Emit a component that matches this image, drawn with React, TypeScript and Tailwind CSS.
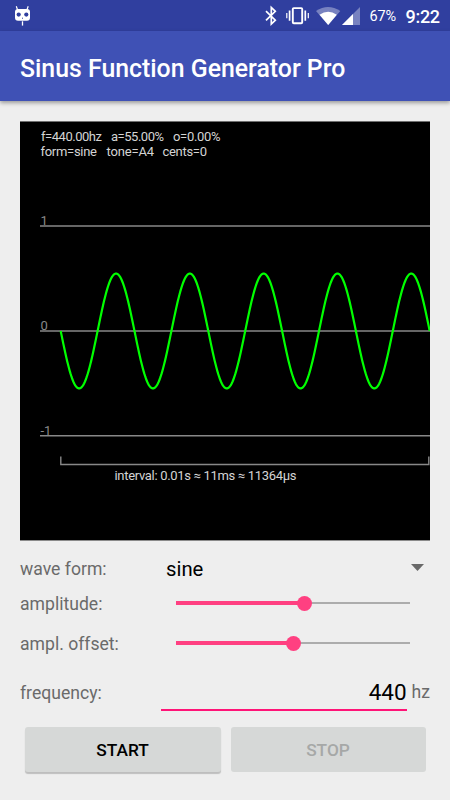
import type { ReactNode } from "react";

const AMPLITUDE = 57.5;
const PERIOD = 73.8;

function wavePath() {
  const points: string[] = [];
  for (let x = 0; x <= PERIOD * 5; x += 0.9) {
    const y = 210 + AMPLITUDE * Math.sin((x / PERIOD) * Math.PI * 2);
    points.push(`${(40.7 + x).toFixed(2)},${y.toFixed(2)}`);
  }
  return `M${points.join("L")}`;
}

const readouts = [
  { x: 21, y: 19.7, width: 61, text: "f=440.00hz" },
  { x: 91, y: 19.7, width: 53, text: "a=55.00%" },
  { x: 153, y: 19.7, width: 47.5, text: "o=0.00%" },
  { x: 20.5, y: 34.7, width: 56.5, text: "form=sine" },
  { x: 86.5, y: 34.7, width: 47.5, text: "tone=A4" },
  { x: 142.5, y: 34.7, width: 44.5, text: "cents=0" },
];

const gridLines = [
  { y: 105.1, label: "1" },
  { y: 210.1, label: "0" },
  { y: 314.7, label: "-1" },
];

function StatusBar() {
  return (
    <div className="flex h-[31px] items-center bg-[#303f9f] text-white">
      <svg className="ml-[14px] h-[22px] w-[17px]" viewBox="0 0 17 22">
        <path d="M2.3 1.3 3.6 5M14.2 1.3 12.9 5" stroke="white" strokeWidth="1.2" />
        <rect x="1" y="4" width="15" height="11.8" rx="3" fill="white" />
        <circle cx="4.7" cy="9.6" r="2.1" fill="#303f9f" />
        <circle cx="12.3" cy="9.6" r="2.1" fill="#303f9f" />
        <path d="M8 13.2h1" stroke="#303f9f" />
        <path d="M8.5 16.3v4.3" stroke="white" strokeWidth="1.3" />
      </svg>
      <svg className="ml-[231px] h-[22px] w-[100px]" viewBox="262 5 100 22">
        <path d="m266 11.2 9.3 9-4 3.8V7.4l4 3.9-9.3 9.1" fill="none" stroke="white" strokeWidth="1.7" />
        <rect x="292.8" y="8.1" width="9.4" height="15.2" rx="1" fill="none" stroke="white" strokeWidth="1.9" />
        <path d="M289.6 10.5v10.3M305.3 10.5v10.3" stroke="white" strokeWidth="1.7" />
        <path d="M286.8 13v5.3M308.3 13v5.3" stroke="white" strokeWidth="1.2" />
        <path d="M316 11q12-8 24.3 0L328.2 25Z" fill="white" opacity=".35" />
        <path d="M319.5 14.7q8.7-5.8 17.3 0L328.2 25Z" fill="white" />
        <path d="M342 25 360 7v18Z" fill="white" opacity=".35" />
        <path d="m342 25 11-11v11Z" fill="white" />
      </svg>
      <span className="ml-[7.5px] w-[36px] pt-[3px] text-[14.5px] leading-none tracking-[-0.2px]">67%</span>
      <span className="pt-[2px] text-[18px] leading-none font-medium tracking-[-0.3px]">9:22</span>
    </div>
  );
}

function Scope() {
  return (
    <svg className="block h-[418px] w-[410px]" viewBox="0 1 410 418">
      <g fill="#d4d4d4" fontSize="13">
        {readouts.map((r) => (
          <text key={r.text} x={r.x} y={r.y} textLength={r.width}>
            {r.text}
          </text>
        ))}
        <text x="94.5" y="358.7" textLength="182">
          interval: 0.01s ≈ 11ms ≈ 11364μs
        </text>
      </g>
      {gridLines.map((line) => (
        <g key={line.label}>
          <text x="20.5" y={line.y - 1} fill="#888888" fontSize="13">
            {line.label}
          </text>
          <path d={`M20 ${line.y}H410`} stroke="#888888" strokeWidth="1.5" />
        </g>
      ))}
      <path d="M40.8 335.5v8h368v-8" fill="none" stroke="#888888" strokeWidth="1.4" />
      <path d={wavePath()} fill="none" stroke="#00ff00" strokeWidth="2.2" />
    </svg>
  );
}

function Row({ label, className, children }: { label: string; className: string; children: ReactNode }) {
  return (
    <div className={`flex items-center ${className}`}>
      <span className="w-[141px] shrink-0 pt-[2px] text-[17.6px] text-[#6a6a6a]">{label}</span>
      {children}
    </div>
  );
}

function Slider({ value }: { value: number }) {
  return (
    <div className="ml-[15px] flex w-[234px] items-center">
      <div className="h-1 bg-[#ff4081]" style={{ width: `${value}%` }} />
      <div className="z-10 -mx-[7.5px] size-[15px] shrink-0 rounded-full bg-[#ff4081]" />
      <div className="h-[2px] flex-1 bg-[#acacac]" />
    </div>
  );
}

export default function App() {
  return (
    <div className="h-[800px] w-[450px] overflow-hidden bg-[#eeeeee] font-['Roboto',sans-serif]">
      <StatusBar />
      <header className="flex h-[70px] items-center bg-[#3f51b5] pt-[5px] pl-5 shadow-[0_2px_4px_rgba(0,0,0,0.35)]">
        <h1 className="text-[24.85px] font-medium text-white">Sinus Function Generator Pro</h1>
      </header>
      <main className="px-5 pt-5">
        <div className="border-t border-b border-t-[#6f6f6f] border-b-[#8a8a8a] bg-black">
          <Scope />
        </div>
        <div className="pt-[9px]">
          <Row label="wave form:" className="h-[37px]">
            <span className="ml-[5px] flex-1 pt-px text-[20.3px] text-black">sine</span>
            <svg className="mr-[6px] mb-[2px] h-[7px] w-[13px]" viewBox="0 0 13 7">
              <path d="M0 0h13L6.5 7Z" fill="#696969" />
            </svg>
          </Row>
          <Row label="amplitude:" className="h-[32px]">
            <Slider value={55} />
          </Row>
          <Row label="ampl. offset:" className="h-[48px]">
            <Slider value={50} />
          </Row>
          <Row label="frequency:" className="h-[50px]">
            <div className="mb-[6px] h-[43px] w-[246px] border-b-2 border-[#ff1477] pt-[4px] text-right text-[22.5px] leading-[40px] text-black">
              440
            </div>
            <span className="ml-[5px] pt-px text-[17.6px] text-[#6a6a6a]">hz</span>
          </Row>
        </div>
        <div className="flex gap-[10px] px-[4.5px] pt-[10px] text-[17.3px] font-medium">
          <button className="h-[45px] w-[196px] rounded-[3px] bg-[#d6d8d7] pt-[2px] text-black shadow-[0_2px_1px_rgba(0,0,0,0.2)]">
            START
          </button>
          <button className="h-[45px] w-[195px] rounded-[3px] bg-[#d6d8d7] pt-[2px] text-[#a6a8a7]" disabled>
            STOP
          </button>
        </div>
      </main>
    </div>
  );
}
